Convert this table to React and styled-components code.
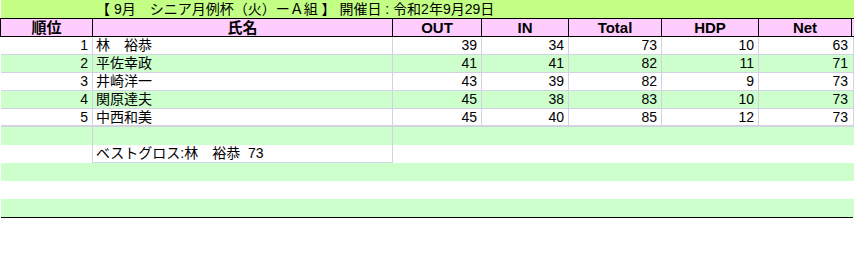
import React from "react";
import styled, { createGlobalStyle } from "styled-components";

const Global = createGlobalStyle`
  body {
    margin: 0;
    background: #fff;
    font-family: "Liberation Sans", "Noto Sans CJK JP", sans-serif;
    color: #000;
  }
`

const COLS = "92px 300px 89px 87px 93px 97px 93px";

const Sheet = styled.div`
  width: 853px;
  padding-left: 1px;
`

const TitleBar = styled.div`
  height: 18px;
  background: #c2ff84;
  font-size: 14px;
  line-height: 18px;
  padding-left: 95px;
  white-space: pre;
`

const HeadRow = styled.div`
  display: grid;
  grid-template-columns: ${COLS};
  border-top: 1px solid #000;
  border-bottom: 1px solid #000;
  border-left: 1px solid #000;
  margin-left: -1px;
  background: #ffccff;
  height: 19px;
  box-sizing: border-box;
`

const HeadCell = styled.div`
  border-right: 1px solid #000;
  text-align: center;
  font-weight: bold;
  font-size: 15px;
  line-height: 17px;
`

const Row = styled.div`
  display: grid;
  grid-template-columns: ${COLS};
  height: 18px;
  box-sizing: border-box;
  background: ${(p) => (p.$green ? "#ccffcc" : "#ffffff")};
  border-bottom: ${(p) => (p.$line ? `${p.$line}px solid #d2d2e2` : "none")};
  border-right: ${(p) => (p.$grid ? "1px solid #d2d2e2" : "none")};
`

const Cell = styled.div`
  border-right: ${(p) => (p.$edge ? "1px solid #d2d2e2" : "none")};
  text-align: ${(p) => (p.$num ? "right" : "left")};
  padding: ${(p) => (p.$num ? "0 4px 0 0" : "0 0 0 3px")};
  font-size: 14px;
  line-height: 17px;
  white-space: pre;
  overflow: hidden;
`

const BestCell = styled(Cell)`
  border-left: 1px solid #d2d2e2;
  border-bottom: 1px solid #d2d2e2;
  margin-left: -1px;
`

const Rule = styled.div`
  height: 1px;
  background: #000;
  width: 852px;
`

const players = [
  { rank: 1, name: "林　裕恭", out: 39, inn: 34, total: 73, hdp: 10, net: 63 },
  { rank: 2, name: "平佐幸政", out: 41, inn: 41, total: 82, hdp: 11, net: 71 },
  { rank: 3, name: "井崎洋一", out: 43, inn: 39, total: 82, hdp: 9, net: 73 },
  { rank: 4, name: "関原達夫", out: 45, inn: 38, total: 83, hdp: 10, net: 73 },
  { rank: 5, name: "中西和美", out: 45, inn: 40, total: 85, hdp: 12, net: 73 },
];

export default function App() {
  return (
    <Sheet>
      <Global />
      <TitleBar>{"【 9月　シニア月例杯（火）ーＡ組 】 開催日 : 令和2年9月29日"}</TitleBar>
      <HeadRow>
        <HeadCell>順位</HeadCell>
        <HeadCell>氏名</HeadCell>
        <HeadCell>OUT</HeadCell>
        <HeadCell>IN</HeadCell>
        <HeadCell>Total</HeadCell>
        <HeadCell>HDP</HeadCell>
        <HeadCell>Net</HeadCell>
      </HeadRow>
      {players.map((p, i) => (
        <Row key={p.rank} $green={i % 2 === 1} $line={i === 4 ? 2 : 1} $grid>
          <Cell $num $edge>{p.rank}</Cell>
          <Cell $edge>{p.name}</Cell>
          <Cell $num $edge>{p.out}</Cell>
          <Cell $num $edge>{p.inn}</Cell>
          <Cell $num $edge>{p.total}</Cell>
          <Cell $num $edge>{p.hdp}</Cell>
          <Cell $num>{p.net}</Cell>
        </Row>
      ))}
      <Row $green>
        <Cell $edge />
        <Cell $edge />
      </Row>
      <Row>
        <Cell />
        <BestCell $edge>{"ベストグロス:林　裕恭  73"}</BestCell>
      </Row>
      <Row $green />
      <Row />
      <Row $green />
      <Rule />
    </Sheet>
  );
}
